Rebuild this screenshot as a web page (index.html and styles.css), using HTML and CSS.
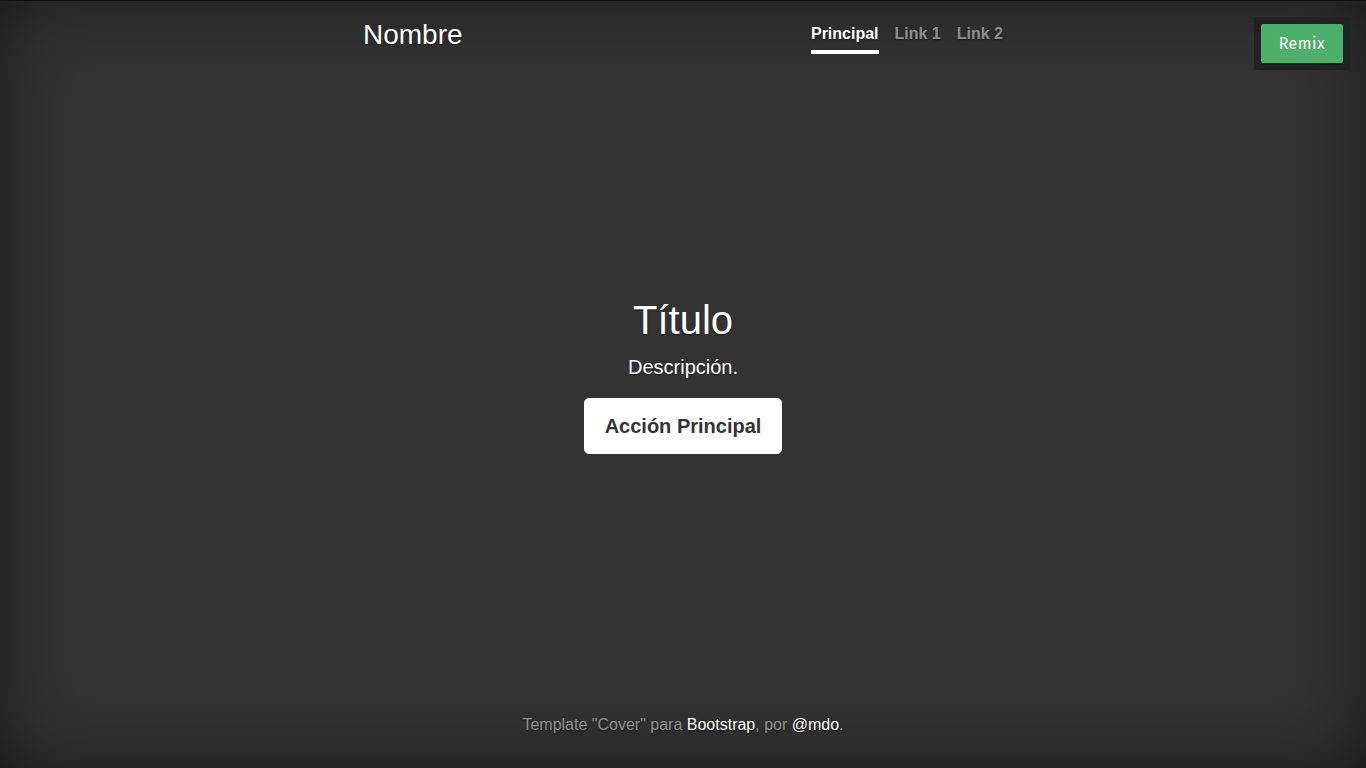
FILE: index.html
```html
<!DOCTYPE html>
<html lang="es">
<head>
<meta charset="utf-8">
<title>Cover</title>
<link rel="stylesheet" href="styles.css">
</head>
<body>
<div class="cover-container">
  <header class="masthead">
    <h3 class="masthead-brand">Nombre</h3>
    <nav class="nav-masthead">
      <a class="nav-link active" href="#">Principal</a>
      <a class="nav-link" href="#">Link 1</a>
      <a class="nav-link" href="#">Link 2</a>
    </nav>
  </header>
  <main class="cover">
    <h1 class="cover-heading">Título</h1>
    <p class="lead">Descripción.</p>
    <p class="lead"><a href="#" class="btn">Acción Principal</a></p>
  </main>
  <footer class="mastfoot">
    <p>Template "Cover" para <a href="#">Bootstrap</a>, por <a href="#">@mdo</a>.</p>
  </footer>
</div>
<div class="remix-wrap"><a class="remix" href="#">Remix</a></div>
</body>
</html>
```
FILE: styles.css
```css
html, body {
  height: 100%;
  margin: 0;
}
body {
  display: flex;
  font-family: "Liberation Sans", Arial, sans-serif;
  font-size: 16px;
  line-height: 1.5;
  color: #fff;
  background-color: #333;
  text-shadow: 0 0.05rem 0.1rem rgba(0,0,0,.5);
  box-shadow: inset 0 1px 0 #111, inset 0 0 5rem rgba(0,0,0,.5);
}
.cover-container {
  display: flex;
  flex-direction: column;
  width: 100%;
  max-width: 42em;
  height: 100%;
  padding: 17px 16px 15px;
  margin: 0 auto;
  box-sizing: border-box;
}
.masthead {
  display: flex;
  justify-content: space-between;
  align-items: flex-start;
  padding-top: 1px;
  margin-bottom: auto;
}
.masthead-brand {
  margin: 0;
  font-size: 28px;
  font-weight: 500;
  line-height: 1.2;
}
.nav-masthead {
  display: flex;
}
.nav-link {
  display: block;
  padding: 0.25rem 0;
  font-weight: 700;
  color: rgba(255,255,255,.5);
  text-decoration: none;
  border-bottom: 0.25rem solid transparent;
}
.nav-link + .nav-link {
  margin-left: 1rem;
}
.nav-link.active {
  color: #fff;
  border-bottom-color: #fff;
}
.cover {
  padding: 0 1rem;
  margin-top: -2px;
  text-align: center;
}
.cover-heading {
  margin: 0 0 0.5rem;
  font-size: 40px;
  font-weight: 500;
  line-height: 1.2;
}
.lead {
  margin: 0 0 1rem;
  font-size: 20px;
  font-weight: 300;
}
.btn {
  display: inline-block;
  padding: 0.75rem 1.25rem;
  font-size: 20px;
  font-weight: 700;
  line-height: 1.5;
  color: #333;
  text-decoration: none;
  text-shadow: none;
  background-color: #fff;
  border: 0.05rem solid #fff;
  border-radius: 0.3rem;
  vertical-align: middle;
}
.mastfoot {
  margin-top: auto;
  text-align: center;
  color: rgba(255,255,255,.5);
}
.mastfoot p {
  margin: 0 0 1rem;
}
.mastfoot a {
  color: #fff;
  text-decoration: none;
}
.remix-wrap {
  position: absolute;
  top: 17px;
  right: 16px;
  padding: 7px;
  background: #222;
  border-radius: 2px;
}
.remix {
  display: block;
  width: 82px;
  height: 39px;
  box-sizing: border-box;
  padding-top: 9px;
  text-align: center;
  font-family: "Fira Sans", "Noto Sans", "Open Sans", sans-serif;
  font-size: 16px;
  line-height: 22px;
  letter-spacing: 0.5px;
  color: #fff;
  text-shadow: none;
  text-decoration: none;
  background: #4caf6a;
  border-radius: 2px;
  box-shadow: 0 2px 0 #1a1a1a;
}
```
